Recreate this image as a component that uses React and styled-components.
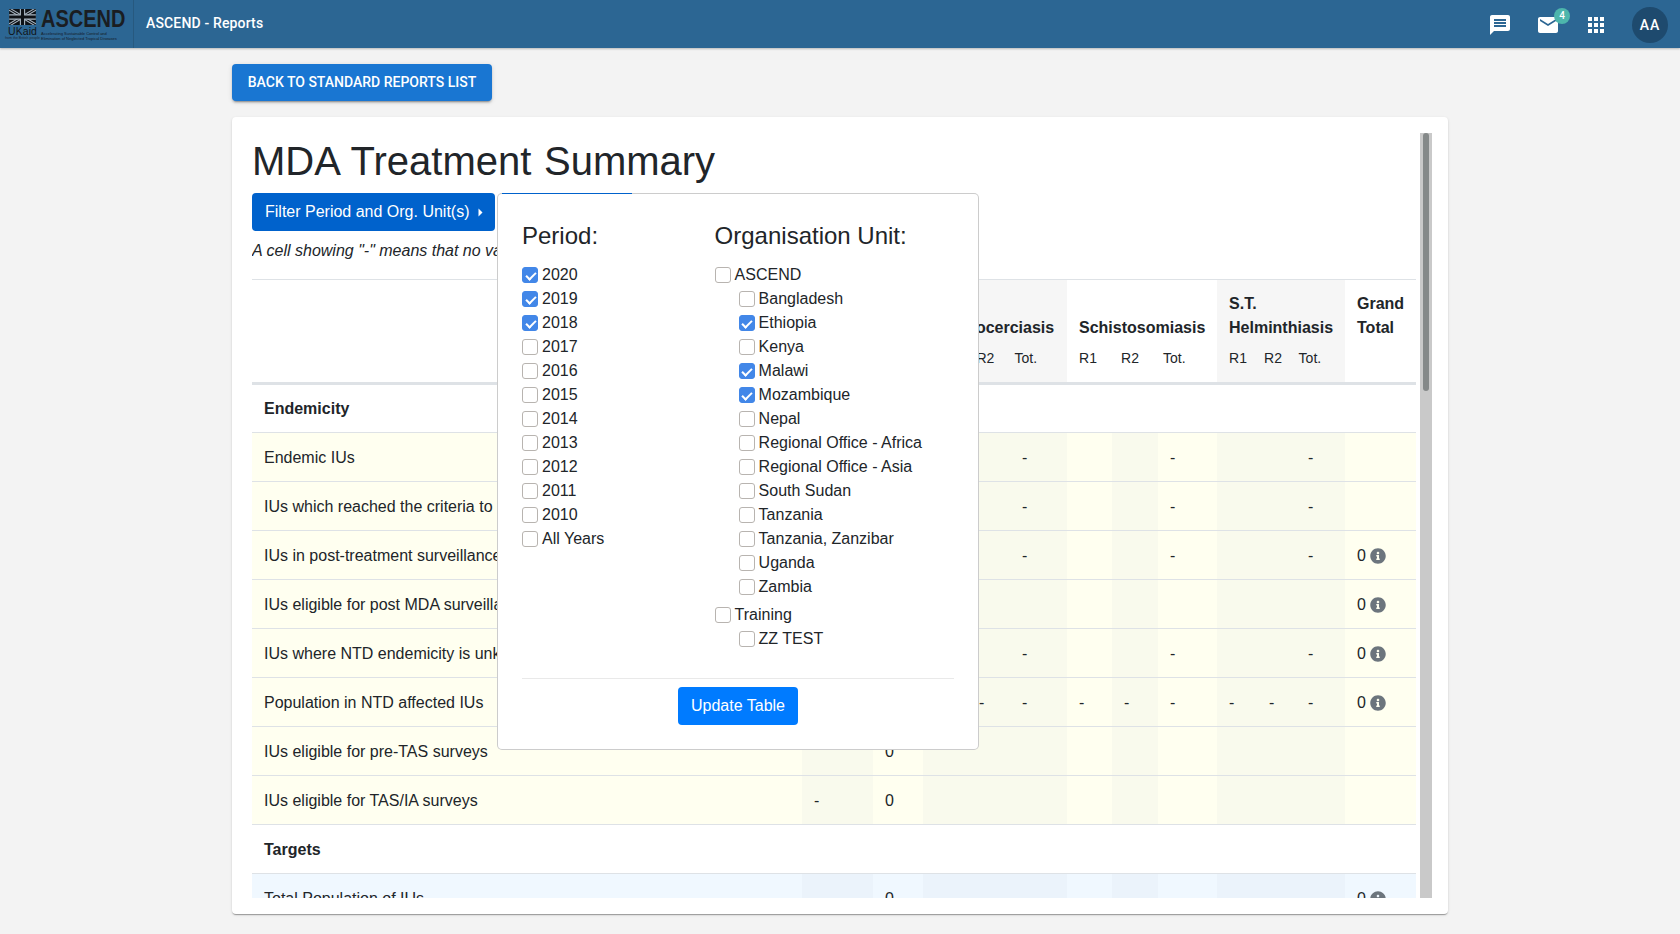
import React from "react";
import styled, { createGlobalStyle } from "styled-components";
import { MdMessage, MdMail, MdApps } from "react-icons/md";
import { FaInfoCircle } from "react-icons/fa";

const Global = createGlobalStyle`
  html, body { margin: 0; padding: 0; height: 100%; overflow: hidden; }
  body { background: #f3f3f3; font-family: "Liberation Sans", Arial, sans-serif; font-size: 16px; line-height: 24px; color: #212529; }
  * { box-sizing: border-box; }
`;

const TopBar = styled.header`
  height: 48px; background: #2c6693; display: flex; align-items: center;
  box-shadow: 0 1px 2px rgba(0,0,0,.25); padding-right: 12px;
`;
const LogoBox = styled.div`
  width: 134px; height: 48px; flex: none; display: flex; align-items: flex-start; gap: 5px;
  padding: 9px 0 0 9px; border-right: 1px solid #27597f; color: #1c1f24;
`;
const UkAid = styled.div`display: flex; flex-direction: column; width: 27px; align-items: center;`;
const UkAidWord = styled.span`
  font: 400 10.5px/9px "Liberation Sans", sans-serif; color: #101418; margin-top: 2px; letter-spacing: .1px;
`;
const UkAidSub = styled.span`font: 3.5px/4px "Liberation Sans", sans-serif; color: #1c2a38; white-space: nowrap;`;
const LogoText = styled.div`display: flex; flex-direction: column; width: 84px;`;
const LogoWord = styled.span`
  font: 700 23.5px/19px "Liberation Sans", sans-serif; color: #1a1d22; white-space: nowrap; margin-top: 1px;
  transform: scaleX(.85); transform-origin: left center;
`;
const LogoTag = styled.span`
  font: 4px/5px "Liberation Sans", sans-serif; color: #141c28; margin-top: 2px; height: 10px; width: 84px;
`;
const AppTitle = styled.div`
  margin-left: 12px; padding-bottom: 2px; font: 500 14px/20px Roboto, sans-serif; letter-spacing: .15px; color: #fff; flex: 1;
`;
const IconButton = styled.div`
  position: relative; width: 48px; height: 48px; display: flex; align-items: center; justify-content: center;
  color: #fff; font-size: 24px; padding-top: 2px;
`;
const Badge = styled.span`
  position: absolute; top: 8px; right: 2px; width: 16px; height: 16px; border-radius: 50%;
  background: #4db6ac; color: #fff; font: 500 10px/16px Roboto, sans-serif; text-align: center;
`;
const Avatar = styled.div`
  width: 36px; height: 36px; border-radius: 50%; background: #1e4a6e; color: #fff; margin-left: 12px; margin-top: 2px;
  font: 500 14px/36px Roboto, sans-serif; text-align: center; letter-spacing: 1px;
`;

const Page = styled.main`width: 1216px; margin: 0 auto; padding-top: 16px;`;
const BackButton = styled.button`
  display: block; height: 37px; width: 260px; border: 0; border-radius: 4px; background: #1976d2; color: #fff;
  font: 500 14px/21px Roboto, sans-serif; text-transform: uppercase; padding: 0;
  box-shadow: 0 3px 1px -2px rgba(0,0,0,.2), 0 2px 2px 0 rgba(0,0,0,.14), 0 1px 5px 0 rgba(0,0,0,.12);
`;
const Card = styled.section`
  margin-top: 16px; height: 797px; background: #fff; border-radius: 4px; padding: 16px 16px 16px 20px; display: flex;
  box-shadow: 0 2px 1px -1px rgba(0,0,0,.2), 0 1px 1px 0 rgba(0,0,0,.14), 0 1px 3px 0 rgba(0,0,0,.12);
`;
const Scroller = styled.div`height: 765px; width: 1168px; flex: none; overflow: hidden;`;
const ScrollTrack = styled.div`width: 12px; height: 765px; background: #c9c9c9; padding: 0 3px; flex: none;`;
const ScrollThumb = styled.div`height: 258px; border-radius: 3px; background: #858989;`;
const Content = styled.div`padding-right: 4px;`;
const Title = styled.h1`
  margin: 4px 0 8px; font: 400 40px/48px "Liberation Sans", sans-serif; word-spacing: 1.5px; color: #212529;
`;
const FilterRow = styled.div`position: relative; height: 38px;`;
const FilterButton = styled.button`
  width: 243px; height: 38px; border: 0; border-radius: 4px; background: #0062cc; color: #fff; padding: 0 0 0 13px;
  font: 400 16px/24px "Liberation Sans", sans-serif; display: flex; align-items: center; gap: 8px;
`;
const Note = styled.p`margin: 8px 0 16px; font-style: italic; line-height: 24px;`;

const Popover = styled.div`
  position: absolute; z-index: 5; left: 245px; top: 0; width: 482px; height: 557px; background: #fff;
  border: 1px solid rgba(0,0,0,.2); border-radius: 5px; padding: 27px 24px 0 24px;
`;
const PopoverAccent = styled.span`
  position: absolute; top: -1px; left: 4px; width: 130px; height: 1px; background: #0062cc;
`;
const FilterColumns = styled.div`display: grid; grid-template-columns: 192.6px 1fr;`;
const FilterHeading = styled.h4`margin: 0 0 13px; font: 400 24px/29px "Liberation Sans", sans-serif; color: #212529;`;
const OptionRow = styled.label`
  display: flex; align-items: center; gap: 4px; height: 24px; margin-left: ${p => p.$child ? 24 : 0}px;
  margin-top: ${p => p.$group ? 4 : 0}px; color: #212529;
`;
const Check = styled.input.attrs({ type: "checkbox", readOnly: true })`
  appearance: none; margin: 0; width: 16px; height: 16px; border-radius: 3px; flex: none; position: relative;
  border: 1px solid #b8b4b0; background: #fff;
  &:checked { background: #4287e8; border-color: #4287e8; }
  &:checked::after {
    content: ""; position: absolute; left: 4.5px; top: 2px; width: 4px; height: 8px;
    border: solid #fff; border-width: 0 2.4px 2.4px 0; transform: rotate(45deg);
  }
`;
const Divider = styled.hr`margin: 27px 0 8px; border: 0; border-top: 1px solid #e9e9e9;`;
const UpdateButton = styled.button`
  display: block; margin: 0 auto; width: 120px; height: 38px; border: 0; border-radius: 4px; background: #007bff; color: #fff;
  font: 400 16px/24px "Liberation Sans", sans-serif;
`;

const Table = styled.table`
  width: 1164px; table-layout: fixed; border-collapse: collapse; color: #212529;
`;
const HeadCell = styled.th`
  padding: 12px 0 0 12px; height: 104px; vertical-align: top; text-align: left; font-weight: 700; line-height: 24px;
  border-top: 1px solid #dee2e6; border-bottom: 3px solid #dee2e6;
  background: ${p => p.$shade ? "#f6f6f6" : "#fff"};
`;
const HeadTitle = styled.div`height: 48px; display: flex; align-items: flex-end; white-space: nowrap;`;
const Subs = styled.div`display: flex; margin-top: 8px; font-weight: 400; font-size: 14px; line-height: 21px;`;
const Sub = styled.span`width: ${p => p.$w}px; flex: none;`;
const SectionCell = styled.td`
  height: 49px; padding: 1px 12px 0; font-weight: 700; background: #fff; border-bottom: 1px solid #dee2e6;
`;
const ToneRow = styled.tr`height: 49px;`;
const tones = {
  yellow: { base: "#fffff0", shade: "#f9faed" },
  blue: { base: "#f0f8ff", shade: "#ebf3fb" },
};
const Cell = styled.td`
  padding: 2px 0 0 12px; white-space: nowrap; overflow: hidden; border-bottom: 1px solid #dee2e6;
  background: ${p => p.$shade ? tones[p.$tone].shade : tones[p.$tone].base};
`;
const InfoValue = styled.span`
  display: inline-flex; align-items: center; gap: 4px;
  & svg { color: #6c757d; font-size: 16px; margin-top: -1px; }
`;

const widths = [550, 71, 50, 44, 43, 57, 45, 46, 59, 40, 39, 49, 71];
const shaded = [true, false, true, true, true, false, true, false, true, true, true];

const Caret = () => (
  <svg width="5" height="9" viewBox="0 0 5 9"><path d="M0.5 0.5 L4.5 4.5 L0.5 8.5Z" fill="#fff" /></svg>
);

const UnionJack = () => (
  <svg width="27" height="16" viewBox="0 0 60 36">
    <rect width="60" height="36" fill="#0d1116" />
    <path d="M0 0L60 36M60 0L0 36" stroke="#a9b6c2" strokeWidth="7" />
    <path d="M0 0L60 36M60 0L0 36" stroke="#0d1116" strokeWidth="2.5" />
    <path d="M30 0V36M0 18H60" stroke="#a9b6c2" strokeWidth="12" />
    <path d="M30 0V36M0 18H60" stroke="#0d1116" strokeWidth="7" />
  </svg>
);

const tots = { 4: "-", 7: "-", 10: "-" };
const rows = [
  { label: "Endemic IUs", v: tots },
  { label: "IUs which reached the criteria to stop MDA", v: tots },
  { label: "IUs in post-treatment surveillance", v: tots, info: true },
  { label: "IUs eligible for post MDA surveillance", v: {}, info: true },
  { label: "IUs where NTD endemicity is unknown", v: tots, info: true },
  { label: "Population in NTD affected IUs", v: { 0: "-", 1: "0", 3: "-", 4: "-", 5: "-", 6: "-", 7: "-", 8: "-", 9: "-", 10: "-" }, info: true },
  { label: "IUs eligible for pre-TAS surveys", v: { 1: "0" } },
  { label: "IUs eligible for TAS/IA surveys", v: { 0: "-", 1: "0" } },
];

const years = ["2020","2019","2018","2017","2016","2015","2014","2013","2012","2011","2010","All Years"];
const checkedYears = new Set(["2020","2019","2018"]);
const units = ["Bangladesh","Ethiopia","Kenya","Malawi","Mozambique","Nepal","Regional Office - Africa","Regional Office - Asia","South Sudan","Tanzania","Tanzania, Zanzibar","Uganda","Zambia"];
const checkedUnits = new Set(["Ethiopia","Malawi","Mozambique"]);

const DataRow = ({ row, tone }) => (
  <ToneRow>
    <Cell $tone={tone}>{row.label}</Cell>
    {shaded.map((s, i) => (
      <Cell key={i} $tone={tone} $shade={s}>{row.v[i] || ""}</Cell>
    ))}
    <Cell $tone={tone}>
      {row.info && <InfoValue>0 <FaInfoCircle /></InfoValue>}
    </Cell>
  </ToneRow>
);

export default function App() {
  return (
    <>
      <Global />
      <TopBar>
        <LogoBox>
          <UkAid>
            <UnionJack />
            <UkAidWord>UKaid</UkAidWord>
            <UkAidSub>from the British people</UkAidSub>
          </UkAid>
          <LogoText>
            <LogoWord>ASCEND</LogoWord>
            <LogoTag>Accelerating Sustainable Control and Elimination of Neglected Tropical Diseases</LogoTag>
          </LogoText>
        </LogoBox>
        <AppTitle>ASCEND - Reports</AppTitle>
        <IconButton><MdMessage /></IconButton>
        <IconButton><MdMail /><Badge>4</Badge></IconButton>
        <IconButton><MdApps /></IconButton>
        <Avatar>AA</Avatar>
      </TopBar>
      <Page>
        <BackButton>Back to standard reports list</BackButton>
        <Card>
          <Scroller>
            <Content>
              <Title>MDA Treatment Summary</Title>
              <FilterRow>
                <FilterButton>Filter Period and Org. Unit(s) <Caret /></FilterButton>
                <Popover>
                  <PopoverAccent />
                  <FilterColumns>
                    <div>
                      <FilterHeading>Period:</FilterHeading>
                      {years.map(y => (
                        <OptionRow key={y}><Check checked={checkedYears.has(y)} />{y}</OptionRow>
                      ))}
                    </div>
                    <div>
                      <FilterHeading>Organisation Unit:</FilterHeading>
                      <OptionRow><Check checked={false} />ASCEND</OptionRow>
                      {units.map(u => (
                        <OptionRow key={u} $child><Check checked={checkedUnits.has(u)} />{u}</OptionRow>
                      ))}
                      <OptionRow $group><Check checked={false} />Training</OptionRow>
                      <OptionRow $child><Check checked={false} />ZZ TEST</OptionRow>
                    </div>
                  </FilterColumns>
                  <Divider />
                  <UpdateButton>Update Table</UpdateButton>
                </Popover>
              </FilterRow>
              <Note>A cell showing "-" means that no value has been entered.</Note>
              <Table>
                <colgroup>
                  {widths.map((w, i) => <col key={i} width={w} />)}
                </colgroup>
                <thead>
                  <tr>
                    <HeadCell />
                    <HeadCell colSpan={2}>
                      <HeadTitle>LF</HeadTitle>
                      <Subs><Sub $w={71}>R1</Sub><Sub $w={38}>Tot.</Sub></Subs>
                    </HeadCell>
                    <HeadCell colSpan={3} $shade>
                      <HeadTitle>Onchocerciasis</HeadTitle>
                      <Subs><Sub $w={41.5}>R1</Sub><Sub $w={38}>R2</Sub><Sub $w={40}>Tot.</Sub></Subs>
                    </HeadCell>
                    <HeadCell colSpan={3}>
                      <HeadTitle>Schistosomiasis</HeadTitle>
                      <Subs><Sub $w={42}>R1</Sub><Sub $w={42}>R2</Sub><Sub $w={40}>Tot.</Sub></Subs>
                    </HeadCell>
                    <HeadCell colSpan={3} $shade>
                      <HeadTitle><span>S.T.<br />Helminthiasis</span></HeadTitle>
                      <Subs><Sub $w={35}>R1</Sub><Sub $w={34.6}>R2</Sub><Sub $w={40}>Tot.</Sub></Subs>
                    </HeadCell>
                    <HeadCell>
                      <HeadTitle><span>Grand<br />Total</span></HeadTitle>
                    </HeadCell>
                  </tr>
                </thead>
                <tbody>
                  <tr><SectionCell colSpan={13}>Endemicity</SectionCell></tr>
                  {rows.map(r => <DataRow key={r.label} row={r} tone="yellow" />)}
                  <tr><SectionCell colSpan={13}>Targets</SectionCell></tr>
                  <DataRow row={{ label: "Total Population of IUs", v: { 1: "0" }, info: true }} tone="blue" />
                </tbody>
              </Table>
            </Content>
          </Scroller>
          <ScrollTrack><ScrollThumb /></ScrollTrack>
        </Card>
      </Page>
    </>
  );
}
